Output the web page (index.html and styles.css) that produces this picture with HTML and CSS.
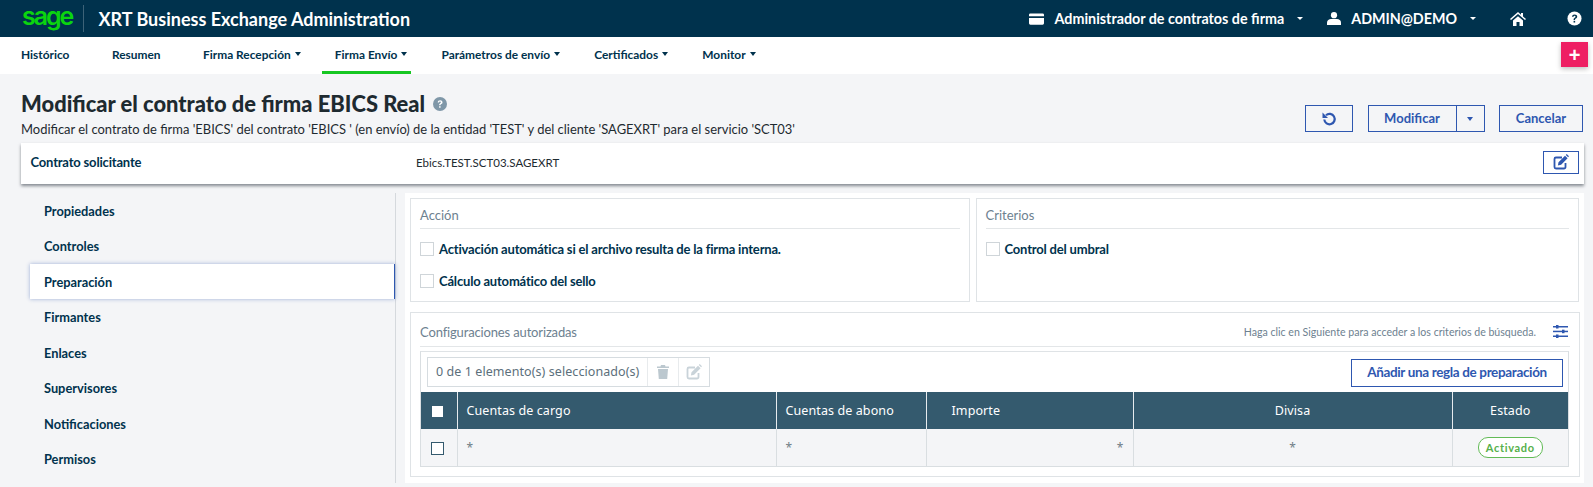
FILE: index.html
```html
<!DOCTYPE html>
<html lang="es">
<head>
<meta charset="utf-8">
<title>XRT Business Exchange Administration</title>
<link rel="stylesheet" href="styles.css">
</head>
<body>
<header class="topbar">
  <span class="logo">sage</span>
  <span class="app-title">XRT Business Exchange Administration</span>
  <div class="top-right">
    <svg class="ic-card" viewBox="0 0 16 12"><path d="M1.500 0h13A1.500 1.500 0 0 1 16 1.500V3H0V1.500A1.500 1.500 0 0 1 1.500 0zM0 5h16v5.500a1.500 1.500 0 0 1-1.500 1.500h-13A1.500 1.500 0 0 1 0 10.500z" fill="#fff"/></svg>
    <span class="top-link role">Administrador de contratos de firma</span>
    <span class="caret-w c1"></span>
    <svg class="ic-user" viewBox="0 0 14 13"><circle cx="7" cy="3.200" r="3.100" fill="#fff"/><path d="M0 13v-2.500C0 8.300 2 7 4 7h6c2 0 4 1.300 4 3.500V13z" fill="#fff"/></svg>
    <span class="top-link user">ADMIN@DEMO</span>
    <span class="caret-w c2"></span>
    <svg class="ic-home" viewBox="0 0 16 14"><path d="M8 0 0 7l1 1 7-6 7 6 1-1-3-2.600V1h-2v1.700z" fill="#fff"/><path d="M3 8.500 8 4.200l5 4.300V14H9.500v-4h-3v4H3z" fill="#fff"/></svg>
    <svg class="ic-help" viewBox="0 0 16 16"><circle cx="8" cy="8" r="7.500" fill="#fff"/><path d="M5.300 6.200C5.400 4.500 6.600 3.600 8.100 3.600c1.600 0 2.800 1 2.800 2.300 0 1.100-.6 1.700-1.400 2.200-.7.400-.9.700-.9 1.400H7c0-1.300.4-1.900 1.200-2.400.6-.4.900-.7.900-1.100 0-.5-.4-.8-1-.8-.7 0-1.100.4-1.100 1z" fill="#00324d"/><rect x="7" y="10.500" width="1.700" height="1.800" fill="#00324d"/></svg>
  </div>
</header>
<nav class="navbar">
  <a class="nav-item first">Histórico</a>
  <a class="nav-item">Resumen</a>
  <a class="nav-item has-menu">Firma Recepción<i class="caret"></i></a>
  <a class="nav-item has-menu active">Firma Envío<i class="caret"></i></a>
  <a class="nav-item has-menu">Parámetros de envío<i class="caret"></i></a>
  <a class="nav-item has-menu">Certificados<i class="caret"></i></a>
  <a class="nav-item has-menu">Monitor<i class="caret"></i></a>
  <button class="plus">+</button>
</nav>
<main class="page">
  <section class="page-head">
    <div class="head-text">
      <h1>Modificar el contrato de firma EBICS Real
        <svg class="ic-q" viewBox="0 0 14 14"><circle cx="7" cy="7" r="7" fill="#7f97a8"/><path d="M4.700 5.400C4.800 4 5.800 3.200 7.100 3.200c1.400 0 2.400.8 2.400 2 0 1-.5 1.500-1.200 1.900-.6.400-.8.600-.8 1.200H6.100c0-1.100.3-1.600 1-2.100.5-.3.800-.6.800-1 0-.4-.3-.7-.9-.7-.6 0-.9.400-1 .9z" fill="#fff"/><rect x="6.100" y="9.200" width="1.500" height="1.500" fill="#fff"/></svg>
      </h1>
      <p>Modificar el contrato de firma 'EBICS' del contrato 'EBICS ' (en envío) de la entidad 'TEST' y del cliente 'SAGEXRT' para el servicio 'SCT03'</p>
    </div>
    <div class="head-actions">
      <button class="btn btn-reset"><svg viewBox="0 0 16 16" class="ic-undo"><path d="M3.300 8.500A5.200 5.200 0 1 0 5 4.200" fill="none" stroke="#2e57b0" stroke-width="2.200"/><path d="M1.500 1.500v5.500H7z" fill="#2e57b0"/></svg></button>
      <div class="split"><button class="btn-main">Modificar</button><button class="btn-drop"><i class="caret blue"></i></button></div>
      <button class="btn btn-cancel">Cancelar</button>
    </div>
  </section>
  <section class="contract">
    <span class="contract-label">Contrato solicitante</span>
    <span class="contract-value">Ebics.TEST.SCT03.SAGEXRT</span>
    <button class="btn btn-edit"><svg viewBox="0 0 16 16" class="ic-edit"><path d="M9 3.500H3a1.500 1.500 0 0 0-1.500 1.500v8A1.500 1.500 0 0 0 3 14.500h8a1.500 1.500 0 0 0 1.500-1.500V9" fill="none" stroke="#2e57b0" stroke-width="1.800"/><path d="M5.500 8.200 12 1.700l2.600 2.600-6.500 6.500-3.200.6zM12.800.9l.9-.9 2.300 2.300-.9.9z" fill="#2e57b0"/></svg></button>
  </section>
  <div class="content">
    <aside class="side">
      <a class="side-item">Propiedades</a>
      <a class="side-item">Controles</a>
      <a class="side-item current">Preparación</a>
      <a class="side-item">Firmantes</a>
      <a class="side-item">Enlaces</a>
      <a class="side-item">Supervisores</a>
      <a class="side-item">Notificaciones</a>
      <a class="side-item">Permisos</a>
    </aside>
    <section class="panel">
      <div class="row-top">
        <div class="box box-action">
          <div class="box-title">Acción</div>
          <label class="check"><i class="cb"></i>Activación automática si el archivo resulta de la firma interna.</label>
          <label class="check"><i class="cb"></i>Cálculo automático del sello</label>
        </div>
        <div class="box box-crit">
          <div class="box-title">Criterios</div>
          <label class="check"><i class="cb"></i>Control del umbral</label>
        </div>
      </div>
      <div class="box box-config">
        <div class="box-title split-title">
          <span>Configuraciones autorizadas</span>
          <span class="hint">Haga clic en Siguiente para acceder a los criterios de búsqueda.
            <svg class="ic-filter" viewBox="0 0 15 13"><g fill="#2e57b0"><rect y="1" width="15" height="1.500"/><rect y="5.700" width="15" height="1.500"/><rect y="10.500" width="15" height="1.500"/><rect x="3" y="0" width="2.500" height="3.500"/><rect x="9" y="4.700" width="2.500" height="3.500"/><rect x="3" y="9.500" width="2.500" height="3.500"/></g></svg>
          </span>
        </div>
        <div class="grid-wrap">
          <div class="grid-tools">
            <div class="selbar">
              <span class="selcount">0 de 1 elemento(s) seleccionado(s)</span>
              <span class="selicon"><svg viewBox="0 0 12 14" class="ic-trash"><path d="M4 0h4l.5 1.500H12V3H0V1.500h3.500zM1 4h10l-.8 10H1.800z" fill="#bcc8cf"/></svg></span>
              <span class="selicon"><svg viewBox="0 0 16 16" class="ic-edit2"><path d="M9 3.500H3a1.500 1.500 0 0 0-1.500 1.500v8A1.500 1.500 0 0 0 3 14.500h8a1.500 1.500 0 0 0 1.500-1.500V9" fill="none" stroke="#c9d3d9" stroke-width="1.800"/><path d="M5.500 8.200 12 1.700l2.600 2.600-6.500 6.500-3.200.6zM12.800.9l.9-.9 2.300 2.300-.9.9z" fill="#c9d3d9"/></svg></span>
            </div>
            <button class="btn btn-add">Añadir una regla de preparación</button>
          </div>
          <table class="grid">
            <colgroup><col class="c-check"><col class="c-a"><col class="c-b"><col class="c-c"><col class="c-d"><col class="c-e"></colgroup>
            <thead><tr>
              <th class="tc"><i class="head-cb"></i></th>
              <th>Cuentas de cargo</th>
              <th>Cuentas de abono</th>
              <th class="th-imp">Importe</th>
              <th class="tc">Divisa</th>
              <th class="tc">Estado</th>
            </tr></thead>
            <tbody><tr>
              <td class="tc"><i class="row-cb"></i></td>
              <td>*</td>
              <td>*</td>
              <td class="tr">*</td>
              <td class="tc">*</td>
              <td class="tc"><span class="badge">Activado</span></td>
            </tr></tbody>
          </table>
        </div>
      </div>
    </section>
  </div>
</main>
</body>
</html>
```
FILE: styles.css
```css
* { box-sizing: border-box; }
html, body { margin: 0; padding: 0; }
body {
  width: 1593px;
  height: 487px;
  overflow: hidden;
  background: #f4f5f7;
  font-family: Lato, "Liberation Sans", sans-serif;
  color: #00324d;
}
button { font-family: inherit; cursor: pointer; }

.topbar {
  height: 37px;
  background: #00324d;
  display: flex;
  align-items: center;
  padding-left: 22px;
  color: #fff;
}
.logo {
  width: 62px;
  height: 27px;
  border-right: 1px solid #3d6378;
  color: #0bd40f;
  font: 600 25px/23px Inter, sans-serif;
  letter-spacing: -2.100px;
}
.app-title {
  margin-left: 14.500px;
  font-size: 18px;
  font-weight: 700;
  white-space: nowrap;
}
.top-right {
  margin-left: auto;
  display: flex;
  align-items: center;
  font-weight: 700;
  font-size: 14.300px;
}
.ic-card { width: 15px; height: 12px; }
.ic-user { width: 14px; height: 13px; margin-left: 24px; }
.ic-home { width: 16px; height: 14px; margin-left: 34px; }
.ic-help { width: 15px; height: 15px; margin: 0 11px 0 41px; }
.top-link { white-space: nowrap; }
.role { margin-left: 11px; }
.user { margin-left: 10px; }
.caret-w {
  margin-left: 13px;
  border: 3px solid transparent;
  border-top: 3.500px solid #fff;
  border-bottom: 0;
}

.navbar {
  position: relative;
  height: 37px;
  background: #fff;
  display: flex;
  align-items: stretch;
  padding-left: 8px;
}
.nav-item {
  display: flex;
  align-items: center;
  padding: 0 13px 3px;
  margin-right: 16.500px;
  font-size: 11.900px;
  font-weight: 700;
  color: #00324d;
  white-space: nowrap;
}
.nav-item.has-menu { padding-right: 4px; margin-right: 17.200px; }
.nav-item.active {
  border-bottom: 3px solid #16c722;
  padding-bottom: 0;
}
.caret {
  display: inline-block;
  margin-left: 4px;
  border: 3px solid transparent;
  border-top: 4px solid #00324d;
  border-bottom: 0;
}
.caret.blue { border-top-color: #2e57b0; margin: 0; }
.plus {
  position: absolute;
  top: 5px;
  left: 1561px;
  width: 27px;
  height: 25px;
  border: 0;
  padding: 0;
  background: #ee1f63;
  color: #fff;
  font: 700 20px/24px "Liberation Sans", sans-serif;
  box-shadow: 0 2px 5px rgba(0,0,0,.25);
}

.page-head {
  height: 69px;
  display: flex;
  justify-content: space-between;
  padding: 0 10px 0 21px;
}
.head-text { padding-top: 17px; }
h1 {
  margin: 0;
  font-size: 21.900px;
  line-height: 25px;
  font-weight: 900;
  color: #1e2a30;
  display: flex;
  align-items: center;
  white-space: nowrap;
}
.ic-q { width: 14px; height: 14px; margin-left: 8px; margin-top: 1px; }
.head-text p {
  margin: 5px 0 0;
  font-size: 12.940px;
  line-height: 17px;
  color: #1e2a30;
  white-space: nowrap;
}
.head-actions { display: flex; gap: 14.500px; padding-top: 31px; }
.btn {
  background: transparent;
  border: 1px solid #2e57b0;
  color: #2e57b0;
  font-size: 13px;
  font-weight: 700;
  padding: 0 0 2px;
  display: flex;
  align-items: center;
  justify-content: center;
}
.btn-reset { width: 48px; height: 27px; padding: 0; }
.ic-undo { width: 16px; height: 16px; }
.split { display: flex; width: 117px; height: 27px; border: 1px solid #2e57b0; }
.btn-main {
  width: 88px;
  border: 0;
  border-right: 1px solid #2e57b0;
  background: transparent;
  color: #2e57b0;
  font-size: 13px;
  font-weight: 700;
  padding: 0 0 2px;
}
.btn-drop { flex: 1; border: 0; background: transparent; padding: 0; display: flex; align-items: center; justify-content: center; }
.btn-cancel { width: 84px; height: 27px; }

.contract {
  height: 41px;
  margin: 0 9px 0 21px;
  background: #fff;
  box-shadow: 0 2px 3px rgba(40,50,60,.55);
  display: flex;
  align-items: center;
  padding: 0 5px 3px 9.500px;
  position: relative;
}
.contract-label { width: 385.500px; font-size: 13px; letter-spacing: -.18px; font-weight: 700; }
.contract-value { font-size: 11.500px; color: #1e2a30; }
.btn-edit { margin-left: auto; width: 36px; height: 23px; padding: 0; }
.ic-edit { width: 16px; height: 16px; }

.content { display: flex; margin-top: 8.750px; align-items: flex-start; }
.side {
  width: 396px;
  height: 290px;
  padding-left: 30px;
  border-right: 1px solid #d5d9dd;
  display: flex;
  flex-direction: column;
}
.side-item {
  height: 35.500px;
  flex: none;
  display: flex;
  align-items: center;
  padding-left: 14px;
  font-size: 12.800px;
  font-weight: 700;
  color: #00324d;
}
.side-item.current {
  background: #fff;
  border-right: 1px solid #2e57b0;
  box-shadow: 0 0 4px rgba(46,87,176,.45);
}

.panel {
  margin-left: 9px;
  width: 1179px;
  height: 290px;
  background: #fff;
  padding: 5.250px 5px 0 5px;
}
.row-top { display: flex; gap: 6px; }
.box { border: 1px solid #dfe3e6; background: #fff; padding: 0 9px; }
.box-action { width: 560px; height: 104px; }
.box-crit { width: 604px; height: 104px; }
.box-title {
  height: 30px;
  border-bottom: 1px solid #e3e6e8;
  font-size: 13px;
  line-height: 32px;
  color: #6d8190;
}
.check {
  display: flex;
  align-items: center;
  height: 32px;
  font-size: 13px;
  letter-spacing: -.18px;
  font-weight: 700;
  color: #00324d;
  white-space: nowrap;
}
.box-title + .check { margin-top: 4px; }
.cb {
  width: 14px;
  height: 14px;
  margin-right: 5px;
  border: 1px solid #cfd5d9;
  background: #fff;
}
.box-config { margin-top: 10px; width: 1170px; height: 165px; padding-top: 2px; }
.split-title { display: flex; justify-content: space-between; height: 32px; line-height: 34px; letter-spacing: -.15px; }
.hint { font-size: 10.600px; letter-spacing: 0; display: flex; align-items: center; padding: 3px 2px 0 0; }
.ic-filter { width: 15px; height: 13px; margin-left: 17px; margin-top: -2px; }
.grid-wrap { margin-top: 4px; width: 1149px; height: 116px; border: 1px solid #d9dee1; border-top-color: #dfe3e6; }
.grid-tools { height: 40px; display: flex; justify-content: space-between; align-items: flex-start; padding: 5px 5px 0 6px; }
.selbar {
  display: flex;
  align-items: stretch;
  height: 30px;
  border: 1px solid #d6dce0;
  background: #fff;
}
.selcount {
  font: 400 12.500px/28px "Noto Sans", sans-serif;
  letter-spacing: .07px;
  color: #5c6f7b;
  padding: 0 8px;
  white-space: nowrap;
}
.selicon {
  width: 31px;
  border-left: 1px solid #e8ebed;
  display: flex;
  align-items: center;
  justify-content: center;
}
.ic-trash { width: 12px; height: 14px; }
.ic-edit2 { width: 16px; height: 16px; }
.btn-add { width: 212px; height: 28px; margin-top: 2px; font-size: 13.500px; letter-spacing: -.35px; }

.grid {
  width: 1147px;
  border-collapse: collapse;
  table-layout: fixed;
  font-family: "Noto Sans", sans-serif;
  font-size: 12.500px;
  letter-spacing: .1px;
}
.c-check { width: 36px; }
.c-a { width: 319px; }
.c-b { width: 150px; }
.c-c { width: 207px; }
.c-d { width: 319px; }
.c-e { width: 116px; }
.grid th {
  height: 37px;
  background: #345a6e;
  color: #fff;
  font-weight: 400;
  text-align: left;
  padding: 0 9px;
  border-left: 1px solid #e6ebee;
}
.grid th:first-child, .grid td:first-child { border-left: 0; padding: 0 3px 0 0; }
.grid td {
  height: 37px;
  background: #f4f5f7;
  color: #6f7d86;
  border-left: 1px solid #d9dee1;
  padding: 0 9px;
  font-size: 12px;
}
.grid th.tc, .grid td.tc { text-align: center; }
.grid th.th-imp { padding-left: 25px; }
.grid td.tr { text-align: right; }
.head-cb { display: inline-block; width: 11px; height: 11px; background: #fff; vertical-align: middle; }
.row-cb { display: inline-block; width: 13px; height: 13px; border: 1px solid #345a6e; background: #fff; vertical-align: middle; }
.badge {
  display: inline-block;
  width: 65px;
  height: 21px;
  border: 1px solid #62bb57;
  border-radius: 10px;
  background: #fff;
  color: #56b04b;
  font: 700 11px/19px Lato, sans-serif;
  letter-spacing: .7px;
  text-align: center;
}
```
